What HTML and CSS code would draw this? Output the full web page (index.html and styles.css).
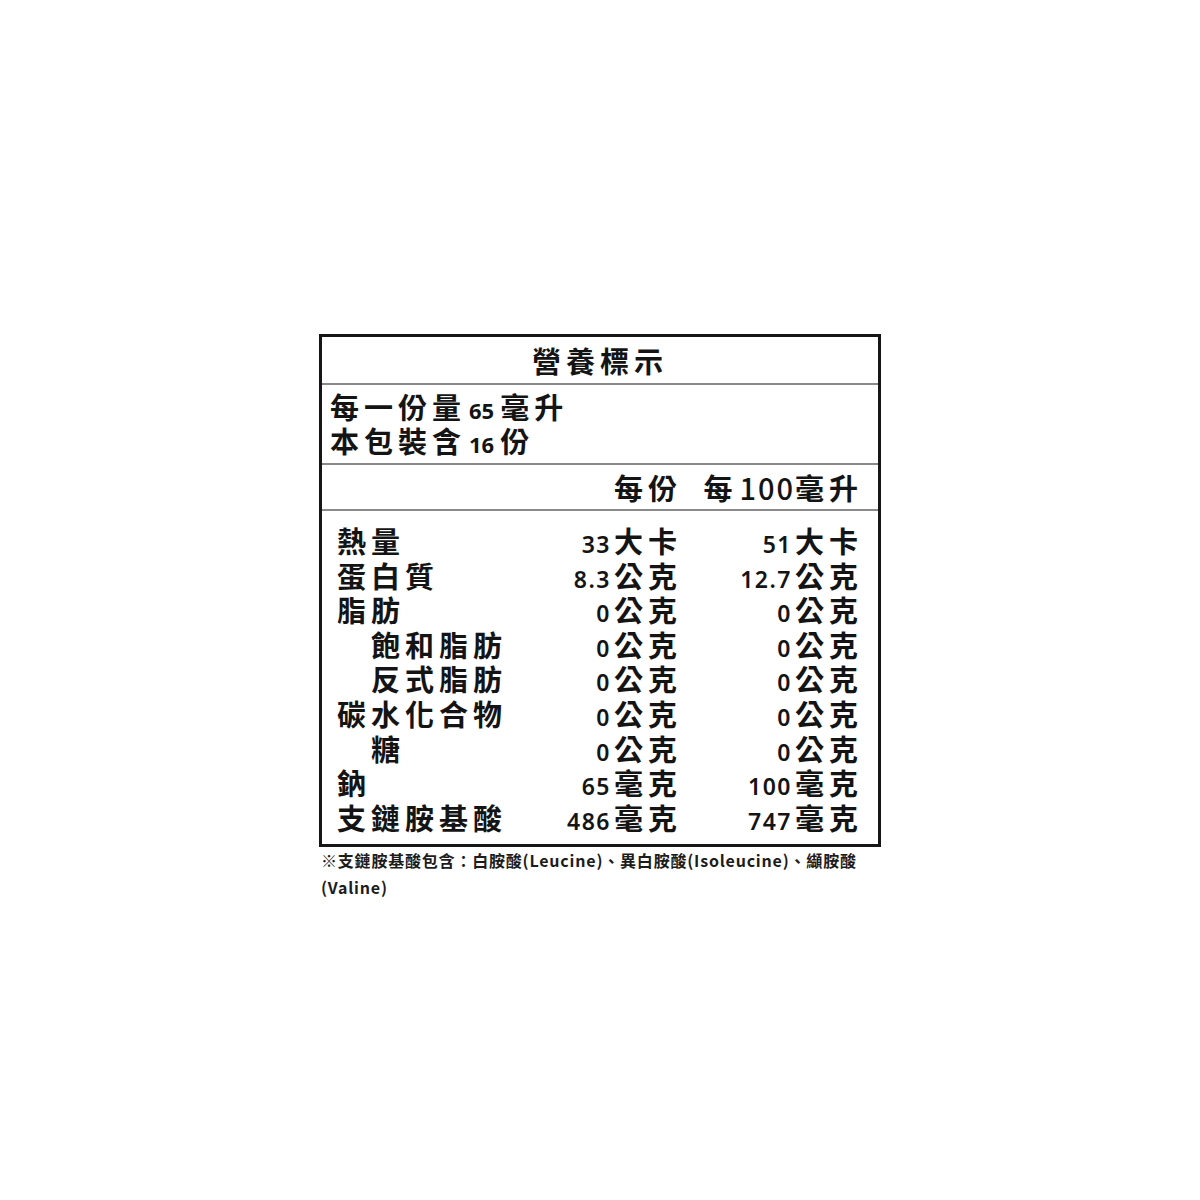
FILE: index.html
```html
<!DOCTYPE html>
<html lang="zh-Hant">
<head>
<meta charset="utf-8">
<title>營養標示</title>
<link rel="stylesheet" href="styles.css">
</head>
<body>
<div class="page">
  <div class="wrap">
    <div class="label">
      <div class="title">營養標示</div>
      <div class="serving">
        <div class="sline">每一份量<span class="snum">65</span>毫升</div>
        <div class="sline">本包裝含<span class="snum">16</span>份</div>
      </div>
      <div class="head grid">
        <div></div>
        <div class="v">每份</div>
        <div class="v">每<span class="hnum">100</span>毫升</div>
      </div>
      <div class="data grid">
        <div class="l">熱量</div><div class="v"><span class="num">33</span>大卡</div><div class="v"><span class="num">51</span>大卡</div>
        <div class="l">蛋白質</div><div class="v"><span class="num">8.3</span>公克</div><div class="v"><span class="num">12.7</span>公克</div>
        <div class="l">脂肪</div><div class="v"><span class="num">0</span>公克</div><div class="v"><span class="num">0</span>公克</div>
        <div class="l indent">飽和脂肪</div><div class="v"><span class="num">0</span>公克</div><div class="v"><span class="num">0</span>公克</div>
        <div class="l indent">反式脂肪</div><div class="v"><span class="num">0</span>公克</div><div class="v"><span class="num">0</span>公克</div>
        <div class="l">碳水化合物</div><div class="v"><span class="num">0</span>公克</div><div class="v"><span class="num">0</span>公克</div>
        <div class="l indent">糖</div><div class="v"><span class="num">0</span>公克</div><div class="v"><span class="num">0</span>公克</div>
        <div class="l">鈉</div><div class="v"><span class="num">65</span>毫克</div><div class="v"><span class="num">100</span>毫克</div>
        <div class="l">支鏈胺基酸</div><div class="v"><span class="num">486</span>毫克</div><div class="v"><span class="num">747</span>毫克</div>
      </div>
    </div>
    <p class="note">※支鏈胺基酸包含：白胺酸(Leucine)、異白胺酸(Isoleucine)、纈胺酸<br>(Valine)</p>
  </div>
</div>
</body>
</html>
```

FILE: styles.css
```css
html, body {
  margin: 0;
  padding: 0;
  background: #ffffff;
}

.page {
  padding-top: 334px;
  font-family: "Noto Sans CJK TC", "Noto Sans", sans-serif;
  color: #141414;
}

.wrap {
  width: 562px;
  margin: 0 auto;
}

.label {
  border: 3px solid #161616;
  box-sizing: border-box;
  width: 562px;
}

.title {
  height: 46px;
  line-height: 46px;
  text-align: center;
  font-size: 29px;
  font-weight: 700;
  letter-spacing: 5px;
  border-bottom: 2px solid #8a8a8a;
}

.serving {
  padding: 4px 0 6px 8px;
  border-bottom: 2px solid #8a8a8a;
}

.sline {
  height: 34px;
  line-height: 34px;
  font-size: 29px;
  font-weight: 700;
  letter-spacing: 5px;
  white-space: nowrap;
}

.snum {
  font-family: "Open Sans", "Noto Sans", sans-serif;
  font-size: 22px;
  font-weight: 700;
  letter-spacing: 0;
  margin-right: 6px;
  margin-left: 3px;
}

.grid {
  display: grid;
  grid-template-columns: minmax(0, 1fr) 200px 181px;
  padding-right: 15px;
  padding-left: 15px;
}

.head {
  height: 44px;
  line-height: 44px;
  border-bottom: 2px solid #8a8a8a;
  font-size: 29px;
  font-weight: 700;
  letter-spacing: 5px;
}

.hnum {
  font-weight: 500;
  letter-spacing: 2px;
  margin-left: 2px;
}

.data {
  padding-top: 12px;
  padding-bottom: 10px;
  grid-auto-rows: 34.6px;
  line-height: 34.6px;
  font-size: 29px;
  font-weight: 700;
  letter-spacing: 5px;
}

.l {
  white-space: nowrap;
}

.indent {
  padding-left: 34px;
}

.v {
  text-align: right;
  white-space: nowrap;
}

.num {
  font-family: "Noto Sans", sans-serif;
  font-size: 23px;
  font-weight: 600;
  letter-spacing: 1.5px;
  margin-right: 3px;
}

.note {
  margin: 0;
  padding-left: 2px;
  font-size: 16px;
  line-height: 27px;
  font-weight: 700;
  letter-spacing: 0.8px;
  color: #1c1c1c;
  white-space: nowrap;
}
```
